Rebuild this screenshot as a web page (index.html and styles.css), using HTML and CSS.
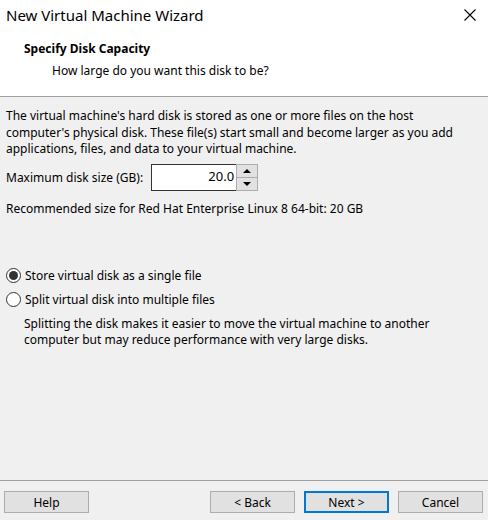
FILE: index.html
```html
<!DOCTYPE html>
<html>
<head>
<meta charset="utf-8">
<link rel="stylesheet" href="styles.css">
</head>
<body>
<div class="dialog">
  <div class="titlebar">
    <span class="title">New Virtual Machine Wizard</span>
    <svg class="close" width="12" height="12" viewBox="0 0 12 12"><path d="M0.5 0.5 L11.5 11.5 M11.5 0.5 L0.5 11.5" stroke="#000" stroke-width="1.1" fill="none"/></svg>
  </div>
  <div class="header">
    <div class="h-title">Specify Disk Capacity</div>
    <div class="h-sub">How large do you want this disk to be?</div>
  </div>
  <div class="body">
    <p class="intro">The virtual machine's hard disk is stored as one or more files on the host<br>computer's physical disk. These file(s) start small and become larger as you add<br>applications, files, and data to your virtual machine.</p>
    <div class="size-row">
      <span class="label">Maximum disk size (GB):</span>
      <div class="spin">
        <div class="spin-input">20.0</div>
        <div class="spin-btns">
          <div class="spin-btn"><span class="tri up"></span></div>
          <div class="spin-btn"><span class="tri down"></span></div>
        </div>
      </div>
    </div>
    <div class="recommend">Recommended size for Red Hat Enterprise Linux 8 64-bit: 20 GB</div>
    <div class="radios">
      <div class="radio-row"><span class="radio checked"></span><span>Store virtual disk as a single file</span></div>
      <div class="radio-row"><span class="radio"></span><span>Split virtual disk into multiple files</span></div>
      <p class="desc">Splitting the disk makes it easier to move the virtual machine to another<br>computer but may reduce performance with very large disks.</p>
    </div>
  </div>
  <div class="footer">
    <button class="btn">Help</button>
    <div class="spacer"></div>
    <button class="btn">&lt; Back</button>
    <button class="btn default">Next &gt;</button>
    <button class="btn">Cancel</button>
  </div>
</div>
</body>
</html>
```
FILE: styles.css
```css
* { box-sizing: border-box; }
html, body { margin: 0; padding: 0; }
body {
  width: 488px;
  height: 520px;
  font-family: "Noto Sans", "Open Sans", sans-serif;
  font-size: 12px;
  color: #000;
  background: #f0f0f0;
  overflow: hidden;
}
.dialog { display: flex; flex-direction: column; height: 520px; }
.titlebar {
  height: 30px;
  background: #fff;
  display: flex;
  align-items: center;
  justify-content: space-between;
  padding: 0 12px 0 6px;
}
.title { font-size: 15px; color: #000; }
.close { display: block; }
.header {
  height: 67px;
  background: #fff;
  border-bottom: 1px solid #a0a0a0;
  padding: 10px 0 0 24px;
}
.h-title { font-weight: bold; line-height: 18px; }
.h-sub { padding-left: 28px; margin-top: 4px; line-height: 18px; }
.body { flex: 1; padding: 11px 6px 0 6px; }
.intro { margin: 0; line-height: 16.5px; }
.size-row { display: flex; align-items: center; margin-top: 6px; gap: 8px; }
.spin { display: flex; align-items: stretch; }
.spin-input {
  width: 86px; height: 27px;
  border: 1px solid #333;
  background: #fff;
  text-align: right;
  padding: 2px 2px 0 0;
  font-size: 13px;
}
.spin-btns {
  width: 22px; height: 27px;
  margin-left: -1px;
  border: 1px solid #adadad;
  display: flex; flex-direction: column;
  background: #e1e1e1;
}
.spin-btn { flex: 1; display: flex; align-items: center; justify-content: center; }
.spin-btn:first-child { border-bottom: 1px solid #adadad; }
.tri { width: 0; height: 0; border-left: 4px solid transparent; border-right: 4px solid transparent; }
.tri.up { border-bottom: 4px solid #000; }
.tri.down { border-top: 4px solid #000; }
.recommend { margin-top: 10px; line-height: 16px; }
.radios { margin-top: 47px; }
.radio-row { display: flex; align-items: center; gap: 4px; height: 24px; }
.radio {
  width: 15px; height: 15px;
  border: 1px solid #333;
  border-radius: 50%;
  background: #fff;
  display: flex; align-items: center; justify-content: center;
}
.radio.checked::after {
  content: ""; width: 9px; height: 9px; border-radius: 50%; background: #333;
}
.desc { margin: 4px 0 0 18px; line-height: 16.5px; }
.footer {
  height: 40px;
  border-top: 1px solid #a0a0a0;
  display: flex;
  align-items: flex-start;
  padding: 10px 5px 0 4px;
  gap: 9px;
}
.spacer { flex: 1; }
.btn {
  width: 85px; height: 22px;
  border: 1px solid #adadad;
  background: #e1e1e1;
  font-family: inherit;
  font-size: 12px;
  padding: 0;
  color: #000;
}
.btn.default { border: 2px solid #0078d7; }
```
